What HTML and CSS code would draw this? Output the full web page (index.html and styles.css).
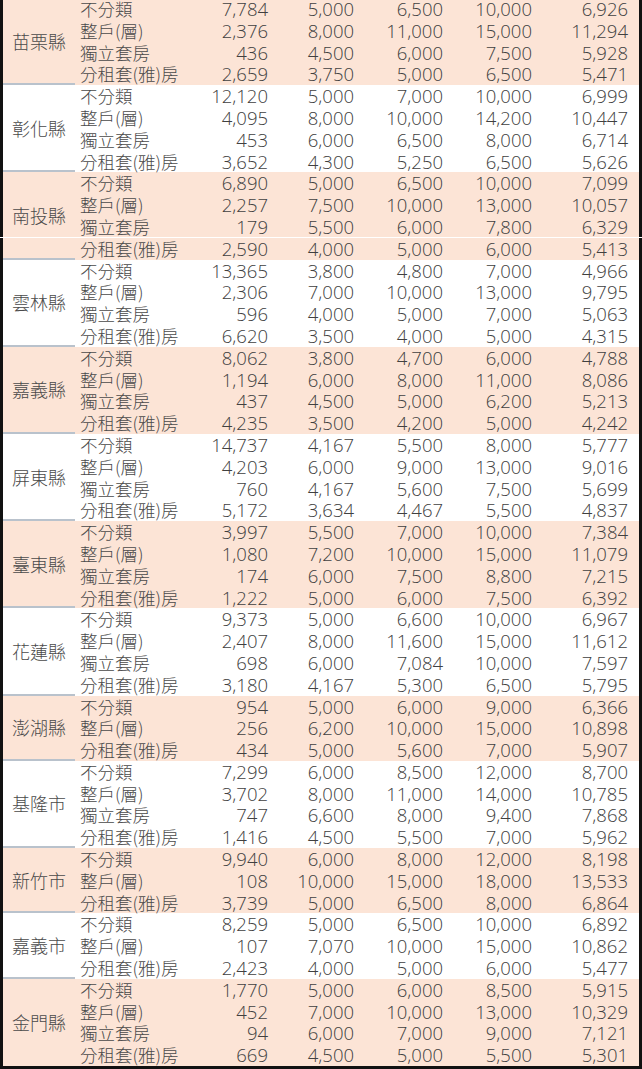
FILE: index.html
```html
<!DOCTYPE html>
<html lang="zh-Hant">
<head>
<meta charset="utf-8">
<title>租金統計</title>
<link rel="stylesheet" href="styles.css">
</head>
<body>
<div class="sheet">
  <div class="group peach">
    <div class="county">苗栗縣</div>
    <div class="rows">
      <div class="row"><span class="cat">不分類</span><span>7,784</span><span>5,000</span><span>6,500</span><span>10,000</span><span>6,926</span></div>
      <div class="row"><span class="cat">整戶(層)</span><span>2,376</span><span>8,000</span><span>11,000</span><span>15,000</span><span>11,294</span></div>
      <div class="row"><span class="cat">獨立套房</span><span>436</span><span>4,500</span><span>6,000</span><span>7,500</span><span>5,928</span></div>
      <div class="row"><span class="cat">分租套(雅)房</span><span>2,659</span><span>3,750</span><span>5,000</span><span>6,500</span><span>5,471</span></div>
    </div>
  </div>
  <div class="group">
    <div class="county">彰化縣</div>
    <div class="rows">
      <div class="row"><span class="cat">不分類</span><span>12,120</span><span>5,000</span><span>7,000</span><span>10,000</span><span>6,999</span></div>
      <div class="row"><span class="cat">整戶(層)</span><span>4,095</span><span>8,000</span><span>10,000</span><span>14,200</span><span>10,447</span></div>
      <div class="row"><span class="cat">獨立套房</span><span>453</span><span>6,000</span><span>6,500</span><span>8,000</span><span>6,714</span></div>
      <div class="row"><span class="cat">分租套(雅)房</span><span>3,652</span><span>4,300</span><span>5,250</span><span>6,500</span><span>5,626</span></div>
    </div>
  </div>
  <div class="group peach">
    <div class="county">南投縣</div>
    <div class="rows">
      <div class="row"><span class="cat">不分類</span><span>6,890</span><span>5,000</span><span>6,500</span><span>10,000</span><span>7,099</span></div>
      <div class="row"><span class="cat">整戶(層)</span><span>2,257</span><span>7,500</span><span>10,000</span><span>13,000</span><span>10,057</span></div>
      <div class="row"><span class="cat">獨立套房</span><span>179</span><span>5,500</span><span>6,000</span><span>7,800</span><span>6,329</span></div>
      <div class="row"><span class="cat">分租套(雅)房</span><span>2,590</span><span>4,000</span><span>5,000</span><span>6,000</span><span>5,413</span></div>
    </div>
  </div>
  <div class="group">
    <div class="county">雲林縣</div>
    <div class="rows">
      <div class="row"><span class="cat">不分類</span><span>13,365</span><span>3,800</span><span>4,800</span><span>7,000</span><span>4,966</span></div>
      <div class="row"><span class="cat">整戶(層)</span><span>2,306</span><span>7,000</span><span>10,000</span><span>13,000</span><span>9,795</span></div>
      <div class="row"><span class="cat">獨立套房</span><span>596</span><span>4,000</span><span>5,000</span><span>7,000</span><span>5,063</span></div>
      <div class="row"><span class="cat">分租套(雅)房</span><span>6,620</span><span>3,500</span><span>4,000</span><span>5,000</span><span>4,315</span></div>
    </div>
  </div>
  <div class="group peach">
    <div class="county">嘉義縣</div>
    <div class="rows">
      <div class="row"><span class="cat">不分類</span><span>8,062</span><span>3,800</span><span>4,700</span><span>6,000</span><span>4,788</span></div>
      <div class="row"><span class="cat">整戶(層)</span><span>1,194</span><span>6,000</span><span>8,000</span><span>11,000</span><span>8,086</span></div>
      <div class="row"><span class="cat">獨立套房</span><span>437</span><span>4,500</span><span>5,000</span><span>6,200</span><span>5,213</span></div>
      <div class="row"><span class="cat">分租套(雅)房</span><span>4,235</span><span>3,500</span><span>4,200</span><span>5,000</span><span>4,242</span></div>
    </div>
  </div>
  <div class="group">
    <div class="county">屏東縣</div>
    <div class="rows">
      <div class="row"><span class="cat">不分類</span><span>14,737</span><span>4,167</span><span>5,500</span><span>8,000</span><span>5,777</span></div>
      <div class="row"><span class="cat">整戶(層)</span><span>4,203</span><span>6,000</span><span>9,000</span><span>13,000</span><span>9,016</span></div>
      <div class="row"><span class="cat">獨立套房</span><span>760</span><span>4,167</span><span>5,600</span><span>7,500</span><span>5,699</span></div>
      <div class="row"><span class="cat">分租套(雅)房</span><span>5,172</span><span>3,634</span><span>4,467</span><span>5,500</span><span>4,837</span></div>
    </div>
  </div>
  <div class="group peach">
    <div class="county">臺東縣</div>
    <div class="rows">
      <div class="row"><span class="cat">不分類</span><span>3,997</span><span>5,500</span><span>7,000</span><span>10,000</span><span>7,384</span></div>
      <div class="row"><span class="cat">整戶(層)</span><span>1,080</span><span>7,200</span><span>10,000</span><span>15,000</span><span>11,079</span></div>
      <div class="row"><span class="cat">獨立套房</span><span>174</span><span>6,000</span><span>7,500</span><span>8,800</span><span>7,215</span></div>
      <div class="row"><span class="cat">分租套(雅)房</span><span>1,222</span><span>5,000</span><span>6,000</span><span>7,500</span><span>6,392</span></div>
    </div>
  </div>
  <div class="group">
    <div class="county">花蓮縣</div>
    <div class="rows">
      <div class="row"><span class="cat">不分類</span><span>9,373</span><span>5,000</span><span>6,600</span><span>10,000</span><span>6,967</span></div>
      <div class="row"><span class="cat">整戶(層)</span><span>2,407</span><span>8,000</span><span>11,600</span><span>15,000</span><span>11,612</span></div>
      <div class="row"><span class="cat">獨立套房</span><span>698</span><span>6,000</span><span>7,084</span><span>10,000</span><span>7,597</span></div>
      <div class="row"><span class="cat">分租套(雅)房</span><span>3,180</span><span>4,167</span><span>5,300</span><span>6,500</span><span>5,795</span></div>
    </div>
  </div>
  <div class="group peach">
    <div class="county">澎湖縣</div>
    <div class="rows">
      <div class="row"><span class="cat">不分類</span><span>954</span><span>5,000</span><span>6,000</span><span>9,000</span><span>6,366</span></div>
      <div class="row"><span class="cat">整戶(層)</span><span>256</span><span>6,200</span><span>10,000</span><span>15,000</span><span>10,898</span></div>
      <div class="row"><span class="cat">分租套(雅)房</span><span>434</span><span>5,000</span><span>5,600</span><span>7,000</span><span>5,907</span></div>
    </div>
  </div>
  <div class="group">
    <div class="county">基隆市</div>
    <div class="rows">
      <div class="row"><span class="cat">不分類</span><span>7,299</span><span>6,000</span><span>8,500</span><span>12,000</span><span>8,700</span></div>
      <div class="row"><span class="cat">整戶(層)</span><span>3,702</span><span>8,000</span><span>11,000</span><span>14,000</span><span>10,785</span></div>
      <div class="row"><span class="cat">獨立套房</span><span>747</span><span>6,600</span><span>8,000</span><span>9,400</span><span>7,868</span></div>
      <div class="row"><span class="cat">分租套(雅)房</span><span>1,416</span><span>4,500</span><span>5,500</span><span>7,000</span><span>5,962</span></div>
    </div>
  </div>
  <div class="group peach">
    <div class="county">新竹市</div>
    <div class="rows">
      <div class="row"><span class="cat">不分類</span><span>9,940</span><span>6,000</span><span>8,000</span><span>12,000</span><span>8,198</span></div>
      <div class="row"><span class="cat">整戶(層)</span><span>108</span><span>10,000</span><span>15,000</span><span>18,000</span><span>13,533</span></div>
      <div class="row"><span class="cat">分租套(雅)房</span><span>3,739</span><span>5,000</span><span>6,500</span><span>8,000</span><span>6,864</span></div>
    </div>
  </div>
  <div class="group">
    <div class="county">嘉義市</div>
    <div class="rows">
      <div class="row"><span class="cat">不分類</span><span>8,259</span><span>5,000</span><span>6,500</span><span>10,000</span><span>6,892</span></div>
      <div class="row"><span class="cat">整戶(層)</span><span>107</span><span>7,070</span><span>10,000</span><span>15,000</span><span>10,862</span></div>
      <div class="row"><span class="cat">分租套(雅)房</span><span>2,423</span><span>4,000</span><span>5,000</span><span>6,000</span><span>5,477</span></div>
    </div>
  </div>
  <div class="group peach last">
    <div class="county">金門縣</div>
    <div class="rows">
      <div class="row"><span class="cat">不分類</span><span>1,770</span><span>5,000</span><span>6,000</span><span>8,500</span><span>5,915</span></div>
      <div class="row"><span class="cat">整戶(層)</span><span>452</span><span>7,000</span><span>10,000</span><span>13,000</span><span>10,329</span></div>
      <div class="row"><span class="cat">獨立套房</span><span>94</span><span>6,000</span><span>7,000</span><span>9,000</span><span>7,121</span></div>
      <div class="row"><span class="cat">分租套(雅)房</span><span>669</span><span>4,500</span><span>5,000</span><span>5,500</span><span>5,301</span></div>
    </div>
  </div>
</div>
<div class="seam"></div>
</body>
</html>
```
FILE: styles.css
```css
html, body {
  margin: 0;
  padding: 0;
  background: #ffffff;
}
body {
  position: relative;
  width: 642px;
  height: 1069px;
  overflow: hidden;
  font-family: "Open Sans", "Noto Sans CJK TC", sans-serif;
  font-weight: 300;
  font-size: 18.5px;
  color: #404040;
}
.sheet {
  margin-top: -2px;
  width: 642px;
  box-sizing: border-box;
  border-left: 3px solid #111;
  border-right: 3px solid #111;
  border-bottom: 3px solid #111;
}
.group {
  display: flex;
  background: #ffffff;
}
.group.peach {
  background: #fce4d6;
}
.county {
  width: 72px;
  flex: none;
  box-sizing: border-box;
  border-bottom: 2px solid #b9c2cc;
  display: flex;
  align-items: center;
  justify-content: center;
  font-family: "Noto Sans CJK TC", sans-serif;
  font-weight: 200;
  font-size: 18px;
  color: #4a4a4a;
}
.group.last .county {
  border-bottom: none;
}
.rows {
  flex: 1;
  display: flex;
  flex-direction: column;
}
.row {
  height: 21.8px;
  display: grid;
  grid-template-columns: 115px 82px 86px 89px 89px 103px;
  align-items: center;
  line-height: 21.8px;
  white-space: nowrap;
}
.row span {
  text-align: right;
  padding-right: 4px;
}
.row span:last-child {
  padding-right: 11px;
}
.row .cat {
  text-align: left;
  padding-left: 5px;
  padding-right: 0;
  font-family: "Noto Sans CJK TC", sans-serif;
  font-weight: 200;
  font-size: 17.5px;
  color: #4a4a4a;
}
.seam {
  position: absolute;
  left: 0;
  right: 0;
  top: 237px;
  height: 1px;
  background: #ffffff;
}
```
